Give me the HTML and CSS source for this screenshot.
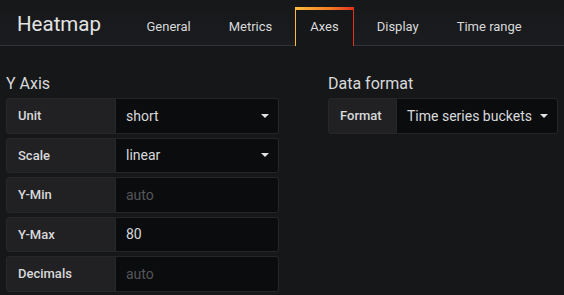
FILE: index.html
```html
<!DOCTYPE html>
<html lang="en">
<head>
    <meta charset="UTF-8">
    <title>Heatmap - Axes</title>
    <link rel="stylesheet" href="styles.css">
</head>
<body>
    <div class="header">
        <h1 class="title">Heatmap</h1>
        <ul class="tabs">
            <li class="tab">General</li>
            <li class="tab">Metrics</li>
            <li class="tab active">Axes</li>
            <li class="tab">Display</li>
            <li class="tab">Time range</li>
        </ul>
    </div>

    <div class="editor">
        <div class="section section-y">
            <h5 class="section-heading">Y Axis</h5>
            <div class="form-row">
                <label class="form-label">Unit</label>
                <div class="form-select">short<span class="caret"></span></div>
            </div>
            <div class="form-row">
                <label class="form-label">Scale</label>
                <div class="form-select">linear<span class="caret"></span></div>
            </div>
            <div class="form-row">
                <label class="form-label">Y-Min</label>
                <div class="form-input placeholder">auto</div>
            </div>
            <div class="form-row">
                <label class="form-label">Y-Max</label>
                <div class="form-input">80</div>
            </div>
            <div class="form-row">
                <label class="form-label">Decimals</label>
                <div class="form-input placeholder">auto</div>
            </div>
        </div>

        <div class="section section-data">
            <h5 class="section-heading">Data format</h5>
            <div class="form-row">
                <label class="form-label label-short">Format</label>
                <div class="form-select select-wide">Time series buckets<span class="caret"></span></div>
            </div>
        </div>
    </div>
</body>
</html>
```

FILE: styles.css
```css
body {
    margin: 0;
    background-color: #161719;
    color: #d8d9da;
    font-family: Roboto, "Noto Sans", sans-serif;
}
.header {
    display: flex;
    align-items: flex-end;
    height: 45px;
    padding-left: 17px;
    border-bottom: 1px solid #333336;
    background: linear-gradient(180deg, #161719 0%, #1b1c1f 100%);
}
.title {
    margin: 3px 30px 0 0;
    align-self: center;
    font-size: 20.5px;
    font-weight: 400;
    color: #e3e3e4;
    white-space: nowrap;
}
.tabs {
    display: flex;
    gap: 7px;
    margin: 0;
    padding: 0;
    list-style: none;
}
.tab {
    height: 35px;
    padding: 0 14.5px;
    line-height: 34px;
    font-size: 13px;
    color: #d8d9da;
    white-space: nowrap;
    border: 1px solid transparent;
    border-top-width: 3px;
    border-bottom: 0;
}
.tab.active {
    margin-bottom: -1px;
    height: 36px;
    background: #161719;
    border-color: #333336;
    border-top: 3px solid transparent;
    border-image: linear-gradient(90deg, #ffbd3b 0%, #f47a24 60%, #e0321f 100%) 3 1 0 1;
}
.editor {
    display: flex;
    gap: 49px;
    padding: 28px 6px 0;
}
.section-y {
    width: 273px;
}
.section-data {
    width: 230px;
}
.section-heading {
    margin: 0 0 4px;
    font-size: 16px;
    line-height: 20px;
    font-weight: 400;
    color: #d8d9da;
}
.form-row {
    display: flex;
    height: 35.5px;
    margin-bottom: 4px;
}
.form-label {
    box-sizing: border-box;
    width: 110px;
    padding-left: 11px;
    display: flex;
    align-items: center;
    font-size: 13px;
    font-weight: 500;
    color: #d8d9da;
    background: #212124;
    border: 1px solid #26272a;
    border-radius: 3px 0 0 3px;
}
.label-short {
    width: 69px;
}
.form-select,
.form-input {
    box-sizing: border-box;
    flex: 1;
    position: relative;
    display: flex;
    align-items: center;
    padding-left: 10px;
    font-size: 14px;
    color: #d8d9da;
    background: #0b0c0e;
    border: 1px solid #262628;
    border-left: 0;
    border-radius: 0 3px 3px 0;
}
.placeholder {
    color: #55565a;
}
.caret {
    position: absolute;
    right: 9px;
    top: 50%;
    margin-top: -2px;
    border-left: 4px solid transparent;
    border-right: 4px solid transparent;
    border-top: 4px solid #e3e3e4;
}
```
